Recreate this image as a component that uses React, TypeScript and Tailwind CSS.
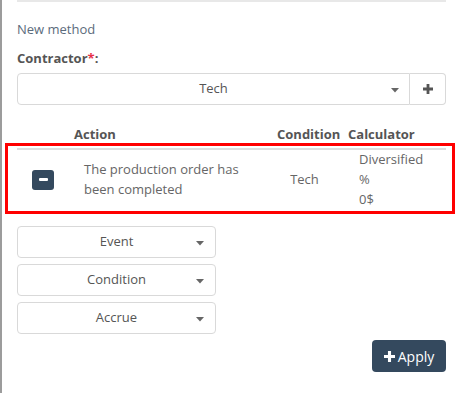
import React from "react";

function Caret() {
  return (
    <svg width="8" height="5" viewBox="0 0 8 5" className="shrink-0">
      <path d="M0 0 L8 0 L4 4.5 Z" fill="#666" />
    </svg>
  );
}

function Dropdown({ label }: { label: string }) {
  return (
    <div className="relative flex h-[32px] w-[199px] items-center justify-center rounded-[4px] border border-[#d9d9d9] bg-white text-[13px] text-[#555]">
      <span>{label}</span>
      <span className="absolute right-[11px] top-[14px] flex">
        <Caret />
      </span>
    </div>
  );
}

export default function App() {
  return (
    <div
      className="h-[393px] w-[462px] overflow-hidden border-l-2 border-[#9c9c9c] bg-white"
      style={{ fontFamily: '"Open Sans", sans-serif' }}
    >
      <div className="pl-[15px] pr-[16px]">
        <div className="border-t-2 border-[#e8e8e8]" />
        <div className="mt-[18px] text-[13px] leading-[18px] text-[#5b6b7c]">New method</div>
        <div className="mt-[11px] text-[13px] font-bold leading-[18px] text-[#555]">
          Contractor<span className="text-[#e8304a]">*</span>:
        </div>
        <div className="mt-[6px] flex h-[32px]">
          <div className="relative flex flex-1 items-center justify-center rounded-l-[4px] border border-[#d9d9d9] text-[13px] text-[#555]">
            <span>Tech</span>
            <span className="absolute right-[10px] top-[14px] flex">
              <Caret />
            </span>
          </div>
          <div className="flex w-[36px] items-center justify-center rounded-r-[4px] border border-l-0 border-[#d9d9d9]">
            <svg width="10" height="10" viewBox="0 0 10 10">
              <path d="M3.6 0h2.8v3.6H10v2.8H6.4V10H3.6V6.4H0V3.6h3.6z" fill="#555" />
            </svg>
          </div>
        </div>

        <div className="mt-[20px] grid grid-cols-[49px_203px_71px_106px] text-[13px] font-bold leading-[18px] text-[#555]">
          <div />
          <div className="pl-[8px]">Action</div>
          <div className="pl-[8px]">Condition</div>
          <div className="pl-[8px]">Calculator</div>
        </div>

        <div className="relative mt-[5px]">
          <div className="pointer-events-none absolute -bottom-[3px] -left-[12px] -right-[9px] -top-[5px] border-[3px] border-[#ff0000]" />
          <div className="grid grid-cols-[49px_203px_71px_106px] border-t-2 border-[#dddddd] pb-[2px] text-[13px] leading-[20px] text-[#666]">
            <div className="flex items-center pl-[15px]">
              <div className="flex h-[20px] w-[22px] items-center justify-center rounded-[3px] bg-[#34495e]">
                <div className="h-[3px] w-[9px] rounded-[1px] bg-white" />
              </div>
            </div>
            <div className="flex items-center pl-[18px]">
              <span className="-mt-[2px]">
                The production order has
                <br />
                been completed
              </span>
            </div>
            <div className="-mt-[1px] flex items-center justify-center">Tech</div>
            <div className="-mt-[1px] pl-[19px]">
              <div>Diversified</div>
              <div>%</div>
              <div>0$</div>
            </div>
          </div>
        </div>

        <div className="mt-[15px] flex flex-col gap-[6px]">
          <Dropdown label="Event" />
          <Dropdown label="Condition" />
          <Dropdown label="Accrue" />
        </div>

        <div className="mt-[6px] flex justify-end">
          <div className="flex h-[32px] w-[74px] items-center justify-center gap-[3px] rounded-[4px] bg-[#34495e] text-[14px] text-white">
            <svg width="11" height="11" viewBox="0 0 10 10">
              <path d="M3.6 0h2.8v3.6H10v2.8H6.4V10H3.6V6.4H0V3.6h3.6z" fill="#fff" />
            </svg>
            <span>Apply</span>
          </div>
        </div>
      </div>
    </div>
  );
}
